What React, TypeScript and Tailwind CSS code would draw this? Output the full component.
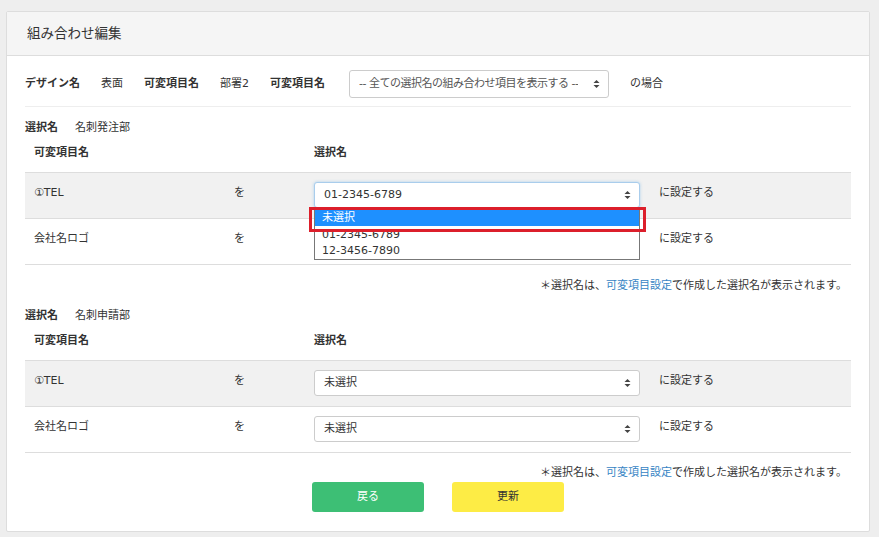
import React from "react";

// 上下矢印（セレクトのキャレット）
const Caret = () => (
  <svg width="7" height="10" viewBox="0 0 7 10" className="shrink-0">
    <path d="M3.5 1 L6.5 4 L0.5 4 Z" fill="#444" />
    <path d="M3.5 9 L6.5 6 L0.5 6 Z" fill="#444" />
  </svg>
);

const FakeSelect = ({
  value,
  focused = false,
  className = "",
  textClass = "",
}: {
  value: string;
  focused?: boolean;
  className?: string;
  textClass?: string;
}) => (
  <div
    className={`flex items-center justify-between bg-white rounded-[3px] border pl-[9px] pr-[8px] ${
      focused ? "border-[#a9cdec] shadow-[0_0_3px_rgba(102,175,233,0.5)]" : "border-[#cccccc]"
    } ${className}`}
  >
    <span className={`truncate ${textClass}`}>{value}</span>
    <Caret />
  </div>
);

interface Row {
  name: string;
  value: string;
}

const Note = ({ className = "" }: { className?: string }) => (
  <div className={`h-[14px] leading-[14px] text-right pr-[4px] text-[#333] ${className}`}>
    ＊選択名は、<span className="text-[#3784c4]">可変項目設定</span>で作成した選択名が表示されます。
  </div>
);

const Section = ({
  label,
  rows,
  withDropdown = false,
}: {
  label: string;
  rows: Row[];
  withDropdown?: boolean;
}) => (
  <div>
    <div className="flex items-center h-[14px] leading-[14px]">
      <span className="font-bold">選択名</span>
      <span className="ml-[17px]">{label}</span>
    </div>
    <div className="grid grid-cols-[200px_80px_345px_1fr] h-[37px] pt-[11px] leading-[14px] font-bold">
      <div className="pl-[9px]">可変項目名</div>
      <div />
      <div className="pl-[9px]">選択名</div>
      <div />
    </div>
    {rows.map((row, i) => (
      <div
        key={row.name}
        className={`grid grid-cols-[200px_80px_345px_1fr] border-t border-[#dddddd] pt-[9px] ${
          i === 0 ? "bg-[#f1f1f1] h-[46px]" : "bg-white border-b h-[47px]"
        }`}
      >
        <div className="pl-[9px] leading-[17px] pt-[2px]">{row.name}</div>
        <div className="pl-[9px] leading-[17px] pt-[2px]">を</div>
        <div className="pl-[9px] relative">
          <FakeSelect
            value={row.value}
            focused={withDropdown && i === 0}
            className="w-[326px] h-[26px]"
          />
          {withDropdown && i === 0 && (
            <>
              <div className="absolute z-10 left-[9px] top-[27px] w-[326px] bg-white border border-[#777777] text-[#333]">
                <div className="h-[16px] leading-[16px] pl-[7px] bg-[#1e90ff] text-white">未選択</div>
                <div className="h-[17px] leading-[17px] pl-[7px]">01-2345-6789</div>
                <div className="h-[16px] leading-[16px] pl-[7px]">12-3456-7890</div>
              </div>
              <div className="absolute z-20 left-[4px] top-[25px] w-[337px] h-[25px] border-[3px] border-[#dc1f2b]" />
            </>
          )}
        </div>
        <div className="pl-[9px] leading-[17px] pt-[2px]">に設定する</div>
      </div>
    ))}
  </div>
);

export default function App() {
  return (
    <div
      className="w-full h-[537px] bg-[#eeeeee] pt-[11px] pl-[6px] pr-[9px] text-[11px] text-[#333333]"
      style={{ fontFamily: '"DejaVu Sans", "Noto Sans CJK JP", sans-serif' }}
    >
      <div className="bg-white border border-[#dddddd] rounded-[2px] h-[521px] flex flex-col">
        {/* ヘッダー */}
        <div className="h-[44px] shrink-0 bg-[#f5f5f5] border-b border-[#dddddd] flex items-center pl-[20px] text-[13.5px]">
          組み合わせ編集
        </div>

        <div className="pl-[18px] pr-[18px]">
          {/* 条件行 */}
          <div className="flex items-center gap-[21px] pt-[14px] pb-[8px] border-b border-[#eeeeee]">
            <span className="font-bold">デザイン名</span>
            <span>表面</span>
            <span className="font-bold">可変項目名</span>
            <span>部署2</span>
            <span className="font-bold">可変項目名</span>
            <FakeSelect
              value="-- 全ての選択名の組み合わせ項目を表示する --"
              className="w-[260px] h-[28px] ml-[3px] text-[#555]"
              textClass="tracking-[-0.5px]"
            />
            <span>の場合</span>
          </div>

          <div className="mt-[14px]">
            <Section
              label="名刺発注部"
              withDropdown
              rows={[
                { name: "①TEL", value: "01-2345-6789" },
                { name: "会社名ロゴ", value: "未選択" },
              ]}
            />
          </div>
          <Note className="mt-[14px]" />

          <div className="mt-[16px]">
            <Section
              label="名刺申請部"
              rows={[
                { name: "①TEL", value: "未選択" },
                { name: "会社名ロゴ", value: "未選択" },
              ]}
            />
          </div>
          <Note className="mt-[13px]" />

          <div className="flex justify-center gap-[28px] mt-[2px]">
            <button className="w-[112px] h-[30px] rounded-[3px] bg-[#3dbf75] text-white">戻る</button>
            <button className="w-[112px] h-[30px] rounded-[3px] bg-[#fdec45] text-[#333]">更新</button>
          </div>
        </div>
      </div>
    </div>
  );
}
